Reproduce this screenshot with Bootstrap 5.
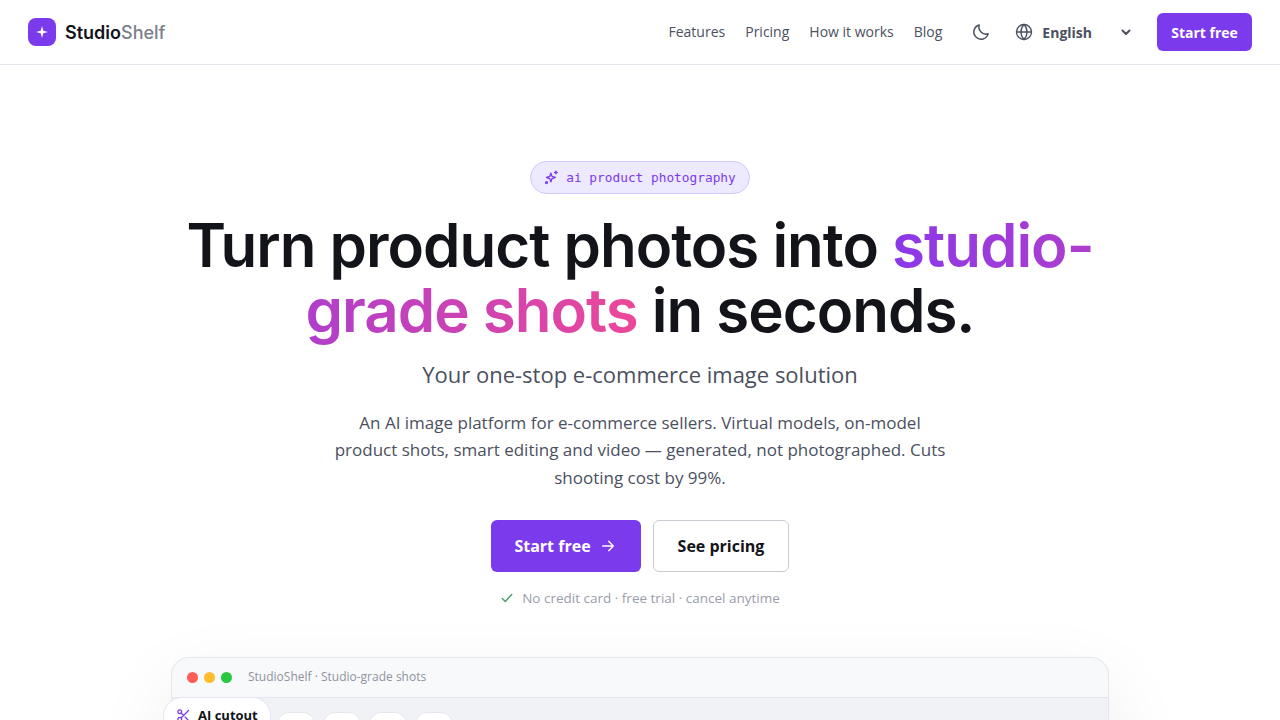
<!DOCTYPE html>
<html lang="en">
<head>
  <meta charset="UTF-8">
  <meta name="viewport" content="width=device-width, initial-scale=1.0">
  <title>StudioShelf</title>
  <link rel="stylesheet" href="https://cdn.jsdelivr.net/npm/bootstrap@5.3.0/dist/css/bootstrap.min.css">
  <style>
    body {
      font-family: "Open Sans", sans-serif;
      color: #4b5060;
      background: #fff;
    }
    .top-bar {
      height: 65px;
      padding: 0 28px;
      border-bottom: 1px solid #e6e7ee;
    }
    .logo-box {
      width: 28px;
      height: 28px;
      border-radius: 8px;
      background: #7c3aed;
    }
    .logo-name {
      font-family: Inter, sans-serif;
      font-size: 18px;
      font-weight: 600;
      color: #12141a;
      margin-left: 1px;
    }
    .logo-name span { color: #7b7f8c; font-weight: 500; }
    .top-links { gap: 20px; margin-bottom: 2px; }
    .top-link {
      font-size: 14px;
      color: #4b5060;
      text-decoration: none;
    }
    .moon-icon { margin-left: 29px; }
    .globe-icon { margin-left: 24px; }
    .lang-name { font-size: 14px; font-weight: 700; margin-left: 9px; }
    .chevron-icon { margin-left: 28px; }
    .start-small {
      background: #7c3aed;
      color: #fff;
      font-size: 14px;
      font-weight: 700;
      height: 38px;
      width: 95px;
      padding: 0;
      margin-left: 25px;
      border-radius: 6px;
      border: 0;
    }
    .hero-area { padding-top: 96px; }
    .tag-pill {
      height: 33px;
      padding: 0 13px;
      background: #ede9fe;
      border: 1px solid #d5c6fb;
      border-radius: 17px;
      color: #7c3aed;
      font-family: "DejaVu Sans Mono", monospace;
      font-size: 12.8px;
      font-weight: 500;
      gap: 7px;
    }
    .hero-title {
      font-family: Inter, sans-serif;
      font-size: 60px;
      line-height: 64.5px;
      font-weight: 600;
      letter-spacing: -1px;
      color: #12141a;
      max-width: 960px;
      margin: 19px auto 0;
    }
    .grad-text {
      background: linear-gradient(90deg, #8b38ea, #ec4899);
      -webkit-background-clip: text;
      background-clip: text;
      color: transparent;
    }
    .hero-sub {
      font-size: 22px;
      line-height: 30px;
      color: #4b5060;
      margin: 17px 0 0;
    }
    .hero-text {
      font-size: 17px;
      line-height: 27.5px;
      color: #4b5060;
      max-width: 620px;
      margin: 19.8px auto 0;
    }
    .btn-main, .btn-second {
      height: 52px;
      font-size: 16px;
      font-weight: 700;
      border-radius: 6px;
    }
    .btn-main {
      background: #7c3aed;
      color: #fff;
      width: 150px;
      border: 0;
      gap: 9px;
      padding: 0 8px 0 6px;
    }
    .btn-second {
      background: #fff;
      color: #12141a;
      width: 136px;
      border: 1px solid #c9cbd3;
    }
    .cta-row { margin-top: 28.7px; gap: 12px; }
    .fine-print {
      font-size: 13.5px;
      color: #9a9dab;
      margin-top: 16px;
    }
    .app-window {
      position: relative;
      width: 938px;
      margin: 48.5px auto 0;
      border: 1px solid #e6e7ee;
      border-radius: 18px;
      background: #f1f2f6;
      box-shadow: 0 30px 80px rgba(18, 20, 26, 0.08);
    }
    .window-head {
      height: 40px;
      padding: 0 15px;
      background: #f8f9fb;
      border-bottom: 1px solid #e6e7ee;
      border-radius: 18px 18px 0 0;
      font-size: 12px;
      color: #8f93a0;
      gap: 6px;
    }
    .win-dot { width: 11px; height: 11px; border-radius: 50%; }
    .win-title { margin-left: 10px; }
    .tool-row { padding: 14px 0 40px 105px; gap: 8px; }
    .tool-tab {
      width: 38px;
      height: 34px;
      background: #fff;
      border: 1px solid #e6e7ee;
      border-radius: 12px;
    }
    .float-chip {
      position: absolute;
      left: -9px;
      top: 39px;
      height: 38px;
      padding: 0 12px;
      background: #fff;
      border: 1px solid #e6e7ee;
      border-radius: 19px;
      font-size: 13px;
      font-weight: 700;
      color: #12141a;
      gap: 7px;
    }
  </style>
</head>
<body>
  <nav class="top-bar d-flex align-items-center justify-content-between">
    <div class="d-flex align-items-center gap-2">
      <span class="logo-box d-flex align-items-center justify-content-center">
        <svg width="14" height="14" viewBox="0 0 14 14"><path d="M7 1 8.300 5.700 13 7 8.300 8.300 7 13 5.700 8.300 1 7 5.700 5.700Z" fill="#fff"/></svg>
      </span>
      <span class="logo-name">Studio<span>Shelf</span></span>
    </div>
    <div class="d-flex align-items-center">
      <div class="top-links d-flex align-items-center">
        <a class="top-link" href="#">Features</a>
        <a class="top-link" href="#">Pricing</a>
        <a class="top-link" href="#">How it works</a>
        <a class="top-link" href="#">Blog</a>
      </div>
      <svg class="moon-icon" width="20" height="20" viewBox="0 0 24 24" fill="none" stroke="#4b5060" stroke-width="1.800" stroke-linecap="round" stroke-linejoin="round"><path d="M20.500 14.200A8.700 8.700 0 0 1 9.800 3.500a8.700 8.700 0 1 0 10.700 10.700Z"/></svg>
      <svg class="globe-icon" width="18" height="18" viewBox="0 0 24 24" fill="none" stroke="#4b5060" stroke-width="1.800" stroke-linecap="round"><circle cx="12" cy="12" r="10"/><path d="M2 12h20M12 2c3 3 4 6.500 4 10s-1 7-4 10c-3-3-4-6.500-4-10s1-7 4-10Z"/></svg>
      <span class="lang-name">English</span>
      <svg class="chevron-icon" width="12" height="12" viewBox="0 0 12 12" fill="none" stroke="#4b5060" stroke-width="2" stroke-linecap="round" stroke-linejoin="round"><path d="M2.500 4.500 6 8l3.500-3.500"/></svg>
      <button class="start-small">Start free</button>
    </div>
  </nav>

  <main class="hero-area text-center">
    <div class="tag-pill d-inline-flex align-items-center">
      <svg width="15" height="15" viewBox="0 0 24 24" fill="none" stroke="#7c3aed" stroke-width="2.200" stroke-linecap="round" stroke-linejoin="round"><path d="M11 5l1.800 5.200L18 12l-5.200 1.800L11 19l-1.800-5.200L4 12l5.200-1.800Z"/><path d="M19 2v4M17 4h4"/><circle cx="4" cy="20" r="1.500"/></svg>
      <span>ai product photography</span>
    </div>
    <h1 class="hero-title">Turn product photos into <span class="grad-text">studio-grade shots</span> in seconds.</h1>
    <p class="hero-sub">Your one-stop e-commerce image solution</p>
    <p class="hero-text">An AI image platform for e-commerce sellers. Virtual models, on-model product shots, smart editing and video — generated, not photographed. Cuts shooting cost by 99%.</p>
    <div class="cta-row d-flex justify-content-center">
      <button class="btn-main d-flex align-items-center justify-content-center">Start free
        <svg width="16" height="16" viewBox="0 0 24 24" fill="none" stroke="#fff" stroke-width="2" stroke-linecap="round" stroke-linejoin="round"><path d="M4 12h16M13 5l7 7-7 7"/></svg>
      </button>
      <button class="btn-second">See pricing</button>
    </div>
    <div class="fine-print d-flex align-items-center justify-content-center gap-2">
      <svg width="14" height="14" viewBox="0 0 24 24" fill="none" stroke="#4f9d6e" stroke-width="2.500" stroke-linecap="round" stroke-linejoin="round"><path d="M4 13l5 5L20 6"/></svg>
      <span>No credit card · free trial · cancel anytime</span>
    </div>

    <div class="app-window text-start">
      <div class="window-head d-flex align-items-center">
        <span class="win-dot" style="background:#ff5f57"></span>
        <span class="win-dot" style="background:#febc2e"></span>
        <span class="win-dot" style="background:#28c840"></span>
        <span class="win-title">StudioShelf · Studio-grade shots</span>
      </div>
      <div class="tool-row d-flex">
        <span class="tool-tab"></span>
        <span class="tool-tab"></span>
        <span class="tool-tab"></span>
        <span class="tool-tab"></span>
      </div>
      <div class="float-chip d-flex align-items-center">
        <svg width="15" height="15" viewBox="0 0 24 24" fill="none" stroke="#7c3aed" stroke-width="2" stroke-linecap="round" stroke-linejoin="round"><circle cx="6" cy="6" r="3"/><circle cx="6" cy="18" r="3"/><path d="M20 4 8.100 15.900M14.500 14.500 20 20M8.100 8.100 12 12"/></svg>
        <span>AI cutout</span>
      </div>
    </div>
  </main>
  <script src="https://cdn.jsdelivr.net/npm/bootstrap@5.3.0/dist/js/bootstrap.bundle.min.js"></script>
</body>
</html>
